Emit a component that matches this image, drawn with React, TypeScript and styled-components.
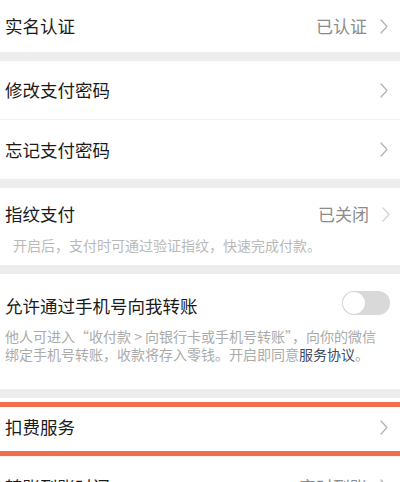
import styled, { createGlobalStyle } from 'styled-components';

const GlobalStyle = createGlobalStyle`
  html, body {
    margin: 0;
    padding: 0;
    background: #ededed;
  }
  body {
    font-family: "Noto Sans CJK SC", "Noto Sans", sans-serif;
    -webkit-font-smoothing: antialiased;
  }
`;

const Page = styled.div`
  width: 400px;
  height: 482px;
  overflow: hidden;
  display: flex;
  flex-direction: column;
  gap: 9px;
  background: #ededed;
`;

const Section = styled.div`
  background: #fff;
  display: flex;
  flex-direction: column;
`;

const Row = styled.div<{ $height?: number; $divider?: boolean }>`
  position: relative;
  height: ${(p) => p.$height ?? 59}px;
  display: flex;
  align-items: center;
  justify-content: space-between;
  padding: 0 12px 0 5px;
  box-sizing: border-box;
  border-bottom: ${(p) => (p.$divider ? '1px solid #f1f1f1' : 'none')};
`;

const Label = styled.span`
  font-size: 17.5px;
  color: #1b1b1b;
  line-height: 24px;
`;

const Trail = styled.div`
  display: flex;
  align-items: center;
  gap: 13px;
`;

const Value = styled.span`
  font-size: 17px;
  color: #8c8c8c;
  line-height: 24px;
`;

const Block = styled.div<{ $top: number; $bottom: number }>`
  display: flex;
  flex-direction: column;
  padding: ${(p) => p.$top}px 0 ${(p) => p.$bottom}px;
`;

const Head = styled.div`
  display: flex;
  align-items: center;
  justify-content: space-between;
  padding: 0 10px 0 5px;
  height: 24px;
`;

const Desc = styled.div<{ $indent: number; $gap: number; $tone: string }>`
  padding-left: ${(p) => p.$indent}px;
  margin-top: ${(p) => p.$gap}px;
  font-size: 14px;
  line-height: 18px;
  color: ${(p) => p.$tone};
  white-space: nowrap;
`;

const Link = styled.span`
  color: #3e4a60;
`;

const Toggle = styled.div`
  width: 48px;
  height: 24px;
  border-radius: 12px;
  background: #d9d9d9;
  display: flex;
  align-items: center;
  padding: 1px;
  box-sizing: border-box;
  margin-top: -7px;
`;

const Knob = styled.div`
  width: 22px;
  height: 22px;
  border-radius: 50%;
  background: #fff;
  box-shadow: 0 0 0 0.5px #cfcfcf;
`;

const Highlight = styled.div`
  position: absolute;
  left: 0;
  right: 0;
  top: 4px;
  bottom: 0;
  border-top: 5px solid #f26d4a;
  border-bottom: 5px solid #f26d4a;
  pointer-events: none;
`;

const Chevron = ({ light }: { light?: boolean }) => (
  <svg width="8" height="15" viewBox="0 0 8 15" fill="none">
    <path
      d="M1 1l6 6.5L1 14"
      stroke={light ? '#d4d4d4' : '#b4b4b4'}
      strokeWidth="1.3"
      strokeLinecap="round"
      strokeLinejoin="round"
    />
  </svg>
);

export default function App() {
  return (
    <>
      <GlobalStyle />
      <Page>
        <Section>
          <Row $height={52}>
            <Label>实名认证</Label>
            <Trail>
              <Value>已认证</Value>
              <Chevron />
            </Trail>
          </Row>
        </Section>

        <Section>
          <Row $divider>
            <Label>修改支付密码</Label>
            <Chevron />
          </Row>
          <Row>
            <Label>忘记支付密码</Label>
            <Chevron />
          </Row>
        </Section>

        <Section>
          <Block $top={14} $bottom={11}>
            <Head>
              <Label>指纹支付</Label>
              <Trail>
                <Value>已关闭</Value>
                <Chevron light />
              </Trail>
            </Head>
            <Desc $indent={13} $gap={10} $tone="#b9b9b9">
              开启后，支付时可通过验证指纹，快速完成付款。
            </Desc>
          </Block>
        </Section>

        <Section>
          <Block $top={20} $bottom={26}>
            <Head>
              <Label>允许通过手机号向我转账</Label>
              <Toggle>
                <Knob />
              </Toggle>
            </Head>
            <Desc $indent={5} $gap={9} $tone="#ababab">
              他人可进入“收付款 &gt; 向银行卡或手机号转账”，向你的微信
              <br />
              绑定手机号转账，收款将存入零钱。开启即同意<Link>服务协议</Link>。
            </Desc>
          </Block>
        </Section>

        <Section>
          <Row $divider>
            <Label>扣费服务</Label>
            <Chevron />
            <Highlight />
          </Row>
          <Row>
            <Label>转账到账时间</Label>
            <Trail>
              <Value>实时到账</Value>
              <Chevron />
            </Trail>
          </Row>
        </Section>
      </Page>
    </>
  );
}
